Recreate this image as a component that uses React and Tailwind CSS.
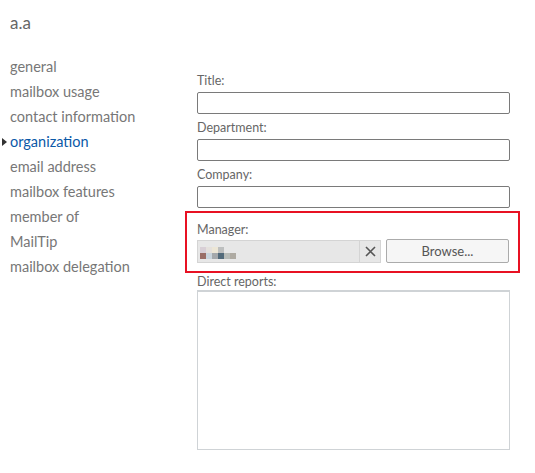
export default function App() {
  const nav = [
    "general",
    "mailbox usage",
    "contact information",
    "organization",
    "email address",
    "mailbox features",
    "member of",
    "MailTip",
    "mailbox delegation",
  ];
  const font = { fontFamily: '"Segoe UI", Lato, "Noto Sans", sans-serif' };
  return (
    <div className="w-[535px] h-[473px] bg-white relative overflow-hidden" style={font}>
      <div className="flex">
        <div className="w-[185px] shrink-0">
          <div className="pl-[10px] pt-[11px] h-[54px] text-[17px] leading-[24px] text-[#666]">a.a</div>
          <ul className="flex flex-col">
            {nav.map((n) => (
              <li
                key={n}
                className={
                  "relative pl-[10px] h-[25px] text-[14.5px] leading-[25px] " +
                  (n === "organization" ? "text-[#0a59a8]" : "text-[#777]")
                }
              >
                {n === "organization" && (
                  <span className="absolute left-[2px] top-[9px] w-0 h-0 border-y-[4px] border-y-transparent border-l-[5px] border-l-[#333]" />
                )}
                {n}
              </li>
            ))}
          </ul>
        </div>
        <div className="flex-1 pt-[72px]">
          <div className="flex flex-col w-[335px]">
            {["Title:", "Department:", "Company:"].map((l) => (
              <div key={l} className="pl-[12px] h-[47px]">
                <div className="text-[12.5px] leading-[17px] text-[#666] h-[20px]">{l}</div>
                <div className="w-[313px] h-[22px] border border-[#7a7a7a] rounded-[2px] bg-white" />
              </div>
            ))}
            <div className="mt-[-2px] w-[335px] h-[62px] border-2 border-[#e81123] pl-[10px] pt-[8px]">
              <div className="text-[12.5px] leading-[17px] text-[#666] h-[18px]">Manager:</div>
              <div className="flex items-center gap-[5px]">
                <div className="flex w-[184px] h-[23px] border border-[#d4d4d4] bg-[#e7e7e7]">
                  <div className="flex-1 flex items-center pl-[2px] pt-[4px]">
                    <div className="grid grid-cols-6 gap-0 w-[36px]">
                      <div className="h-[6px] bg-[#d8cfd6]" />
                      <div className="h-[6px] bg-[#e4e0dc]" />
                      <div className="h-[6px] bg-[#ece6d6]" />
                      <div className="h-[6px] bg-[#bdbfbf]" />
                      <div className="h-[6px] bg-[#e7e7e7]" />
                      <div className="h-[6px] bg-[#e7e7e7]" />
                      <div className="h-[6px] bg-[#9a6e66]" />
                      <div className="h-[6px] bg-[#c9d4dc]" />
                      <div className="h-[6px] bg-[#a4a8ab]" />
                      <div className="h-[6px] bg-[#526a7a]" />
                      <div className="h-[6px] bg-[#b8bcb8]" />
                      <div className="h-[6px] bg-[#aeaaa2]" />
                    </div>
                  </div>
                  <div className="w-[21px] border-l border-[#d4d4d4] flex items-center justify-center">
                    <svg width="11" height="11" viewBox="0 0 11 11">
                      <path d="M1 1L10 10M10 1L1 10" stroke="#555" strokeWidth="1.6" />
                    </svg>
                  </div>
                </div>
                <button className="w-[123px] h-[24px] border border-[#ababab] rounded-[2px] bg-[#f6f6f6] text-[13px] text-[#555] leading-[20px]">
                  Browse...
                </button>
              </div>
            </div>
            <div className="pl-[12px] pt-[1px]">
              <div className="text-[12.5px] leading-[15px] text-[#666] h-[16px]">Direct reports:</div>
              <div className="w-[313px] h-[160px] border border-[#cfd3d6] border-t-2 bg-white" />
            </div>
          </div>
        </div>
      </div>
    </div>
  );
}
